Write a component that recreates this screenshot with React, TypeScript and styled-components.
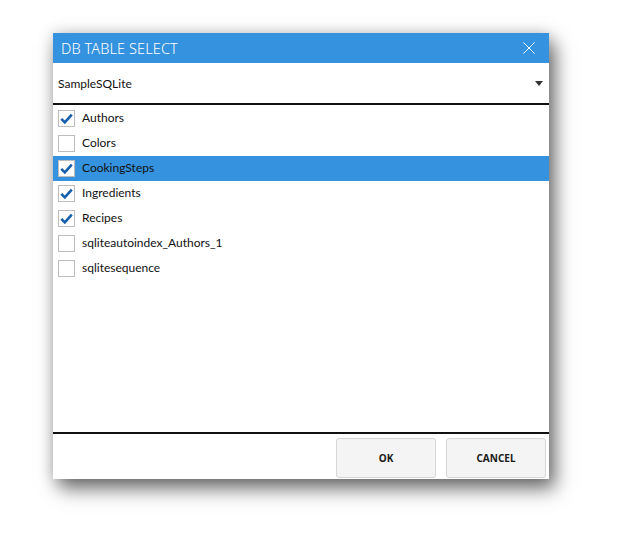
import React, { useState } from "react";
import styled, { createGlobalStyle } from "styled-components";

const Global = createGlobalStyle`
  html, body { margin: 0; padding: 0; background: #fff; }
  body { font-family: "Noto Sans", "Open Sans", sans-serif; }
`;

const Page = styled.div`
  width: 623px;
  height: 534px;
  padding: 33px 0 0 53px;
  box-sizing: border-box;
`;

const Dialog = styled.div`
  width: 496px;
  height: 446px;
  background: #fff;
  display: flex;
  flex-direction: column;
  box-shadow: 6px 10px 18px rgba(0, 0, 0, 0.55), 0 0 14px rgba(0, 0, 0, 0.18);
`;

const TitleBar = styled.div`
  height: 30px;
  background: #3592de;
  display: flex;
  align-items: center;
  justify-content: space-between;
  padding: 0 14px 0 8px;
  color: #fff;
  font-size: 14.5px;
  font-weight: 300;
  letter-spacing: 0.1px;
`;

const Combo = styled.div`
  height: 40px;
  display: flex;
  align-items: center;
  justify-content: space-between;
  padding: 0 6px 0 5px;
  font-family: Lato, "Noto Sans", sans-serif;
  font-size: 12px;
  color: #111;
  border-bottom: 2px solid #111;
`;

const List = styled.div`
  flex: 1;
  display: flex;
  flex-direction: column;
  padding-top: 1px;
`;

const Row = styled.div<{ $selected?: boolean }>`
  height: 25px;
  display: flex;
  align-items: center;
  gap: 7px;
  padding-left: 5px;
  background: ${(p) => (p.$selected ? "#3592de" : "transparent")};
  font-family: Lato, "Noto Sans", sans-serif;
  font-size: 12px;
  color: #111;
`;

const Label = styled.span`
  margin-bottom: 2px;
`;

const Box = styled.div`
  width: 17px;
  height: 17px;
  box-sizing: border-box;
  border: 1px solid #bdbdbd;
  background: #fff;
  display: flex;
  align-items: center;
  justify-content: center;
`;

const Footer = styled.div`
  height: 47px;
  border-top: 2px solid #111;
  display: flex;
  justify-content: flex-end;
  align-items: flex-start;
  gap: 10px;
  padding: 4px 3px 0 0;
  box-sizing: border-box;
`;

const Button = styled.button`
  width: 100px;
  height: 40px;
  background: #f4f4f4;
  border: 1px solid #d6d6d6;
  border-radius: 3px;
  font-family: "Noto Sans", "Open Sans", sans-serif;
  font-size: 10px;
  font-weight: 700;
  color: #1a1a1a;
`;

const Check = () => (
  <svg width="15" height="15" viewBox="0 0 15 15">
    <path d="M2.3 7.8 L5.8 11.3 L12.8 3.6" fill="none" stroke="#155fae" strokeWidth="2.6" />
  </svg>
);

const items = [
  { name: "Authors", checked: true },
  { name: "Colors", checked: false },
  { name: "CookingSteps", checked: true, selected: true },
  { name: "Ingredients", checked: true },
  { name: "Recipes", checked: true },
  { name: "sqliteautoindex_Authors_1", checked: false },
  { name: "sqlitesequence", checked: false },
];

export default function App() {
  const [state] = useState(items);
  return (
    <Page>
      <Global />
      <Dialog>
        <TitleBar>
          <span>DB TABLE SELECT</span>
          <svg width="12" height="12" viewBox="0 0 12 12">
            <path d="M0.5 0.5 L11.5 11.5 M11.5 0.5 L0.5 11.5" stroke="#fff" strokeWidth="1" />
          </svg>
        </TitleBar>
        <Combo>
          <span>SampleSQLite</span>
          <svg width="8" height="5" viewBox="0 0 8 5">
            <path d="M0 0 H8 L4 5 Z" fill="#333" />
          </svg>
        </Combo>
        <List>
          {state.map((it) => (
            <Row key={it.name} $selected={it.selected}>
              <Box>{it.checked && <Check />}</Box>
              <Label>{it.name}</Label>
            </Row>
          ))}
        </List>
        <Footer>
          <Button>OK</Button>
          <Button>CANCEL</Button>
        </Footer>
      </Dialog>
    </Page>
  );
}
